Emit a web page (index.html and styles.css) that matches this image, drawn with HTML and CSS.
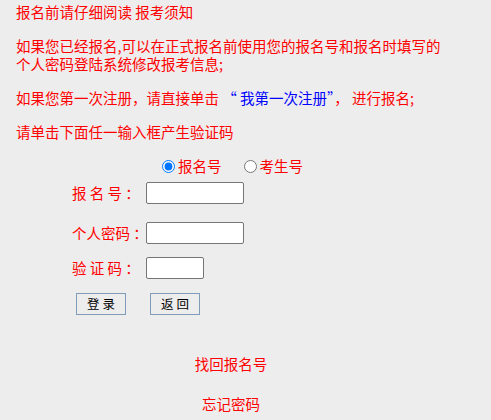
FILE: index.html
```html
<!DOCTYPE html>
<html lang="zh-CN">
<head>
  <meta charset="UTF-8" />
  <meta name="viewport" content="width=device-width, initial-scale=1.0" />
  <title>考生登录</title>
  <link rel="stylesheet" href="styles.css">
</head>
<body>
  <div class="notice">
    <p>报名前请仔细阅读 报考须知</p>
    <p>如果您已经报名,可以在正式报名前使用您的报名号和报名时填写的<br>个人密码登陆系统修改报考信息;</p>
    <p>如果您第一次注册，请直接单击 <a href="#" class="reg-link">“ 我第一次注册”</a>， 进行报名;</p>
    <p>请单击下面任一输入框产生验证码</p>
  </div>
  <form class="login-form">
    <div class="radio-row">
      <label><input type="radio" name="type" checked>报名号</label>
      <label><input type="radio" name="type">考生号</label>
    </div>
    <div class="field-row first">
      <span class="field-label">报 名 号 ：</span>
      <input type="text" class="txt">
    </div>
    <div class="field-row second">
      <span class="field-label">个人密码 ：</span>
      <input type="password" class="txt">
    </div>
    <div class="field-row third">
      <span class="field-label">验 证 码 ：</span>
      <input type="text" class="txt short">
    </div>
    <div class="btn-row">
      <button type="button" class="btn">登 录</button>
      <button type="button" class="btn">返 回</button>
    </div>
  </form>
  <div class="links">
    <a href="#">找回报名号</a>
    <a href="#">忘记密码</a>
  </div>
</body>
</html>
```

FILE: styles.css
```css
:root {
  --red: #ff0000;
  --blue: #0000ff;
  --page: #ededed;
}
* { box-sizing: border-box; }
body {
  margin: 0;
  padding: 3px 16px 0;
  background: var(--page);
  color: var(--red);
  font-family: "Noto Sans CJK SC", "Noto Sans", sans-serif;
  font-size: 14.5px;
  line-height: 18px;
}
.notice p {
  margin: 0 0 16px;
}
.reg-link {
  color: var(--blue);
  text-decoration: none;
}

.login-form {
  margin-top: 6px;
}
.radio-row {
  display: flex;
  gap: 17px;
  padding-left: 141px;
  height: 18px;
  align-items: center;
}
.radio-row label {
  display: flex;
  align-items: center;
}
.radio-row input {
  width: 13px;
  height: 13px;
  margin: 0 3px 0 5px;
}
.field-row {
  display: flex;
  align-items: center;
  padding-left: 56px;
}
.field-row.first { margin-top: 7px; }
.field-row.second { margin-top: 18px; }
.field-row.third { margin-top: 13px; }
.field-label {
  width: 74px;
  white-space: pre;
}
.txt {
  width: 98px;
  height: 22px;
  margin: 0;
  border: 1px solid #767676;
  border-radius: 2px;
  background: #fff;
  font-size: 13px;
}
.txt.short { width: 58px; }
.btn-row {
  display: flex;
  gap: 24px;
  margin-top: 14px;
  padding-left: 60px;
}
.btn {
  width: 50px;
  height: 22px;
  padding: 0;
  border: 1px solid #7f9db9;
  background: var(--page);
  color: #000;
  font-family: "Noto Sans CJK SC", sans-serif;
  font-size: 12.5px;
  line-height: 20px;
}
.links {
  width: 430px;
  display: flex;
  flex-direction: column;
  align-items: center;
  gap: 22px;
  margin-top: 40px;
}
.links a {
  color: var(--red);
  text-decoration: none;
}
```
